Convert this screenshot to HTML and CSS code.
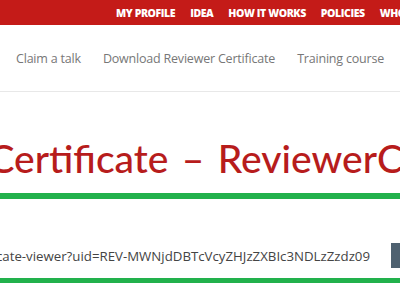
FILE: index.html
```html
<!DOCTYPE html>
<html>
<head>
<meta charset="utf-8">
<link rel="stylesheet" href="styles.css">
</head>
<body>
<div class="topbar">
  <a class="top-link">MY PROFILE</a>
  <a class="top-link">IDEA</a>
  <a class="top-link">HOW IT WORKS</a>
  <a class="top-link">POLICIES</a>
  <a class="top-link">WHO WE ARE</a>
</div>
<div class="subnav">
  <a class="sub-link">Claim a talk</a>
  <a class="sub-link">Download Reviewer Certificate</a>
  <a class="sub-link">Training course</a>
</div>
<div class="title-block">
  <h1 class="title">Certificate – ReviewerCertificate</h1>
</div>
<div class="url-row">
  <span class="url-text">certificate-viewer?uid=REV-MWNjdDBTcVcyZHJzZXBIc3NDLzZzdz09</span>
  <span class="copy-btn"></span>
</div>
</body>
</html>
```
FILE: styles.css
```css
html, body {
  margin: 0;
  padding: 0;
  background: #fff;
  overflow: hidden;
  width: 400px;
  height: 304px;
}
.topbar {
  height: 25px;
  background: #c41b18;
  display: flex;
  align-items: center;
  gap: 15px;
  padding-left: 116px;
  white-space: nowrap;
  overflow: hidden;
  font-family: "Open Sans", sans-serif;
  font-weight: 800;
  font-size: 10.5px;
  letter-spacing: -0.4px;
}
.top-link {
  color: #fff;
  flex: none;
}
.subnav {
  height: 66px;
  border-bottom: 1px solid #e8e8e8;
  display: flex;
  align-items: center;
  gap: 22px;
  padding-left: 16px;
  white-space: nowrap;
  overflow: hidden;
  font-family: "Open Sans", sans-serif;
  font-size: 12.5px;
  letter-spacing: -0.2px;
  color: #777;
}
.sub-link {
  flex: none;
}
.title-block {
  padding-top: 36px;
  overflow: hidden;
}
.title {
  margin: 0 0 0 -11.5px;
  padding-bottom: 5px;
  font-family: Lato, sans-serif;
  font-weight: 500;
  font-size: 39px;
  word-spacing: 3.5px;
  line-height: 60px;
  color: #b71c1c;
  white-space: nowrap;
  border-bottom: 6px solid #22b14c;
}
.url-row {
  display: flex;
  align-items: center;
  justify-content: flex-end;
  gap: 21px;
  padding: 44px 0 10px;
  border-bottom: 5px solid #22b14c;
  overflow: hidden;
  white-space: nowrap;
}
.url-text {
  flex: none;
  font-family: "Open Sans", sans-serif;
  font-size: 13.25px;
  color: #444;
}
.copy-btn {
  flex: none;
  width: 40px;
  height: 25px;
  background: #4e6170;
  margin-right: -31px;
}
```
